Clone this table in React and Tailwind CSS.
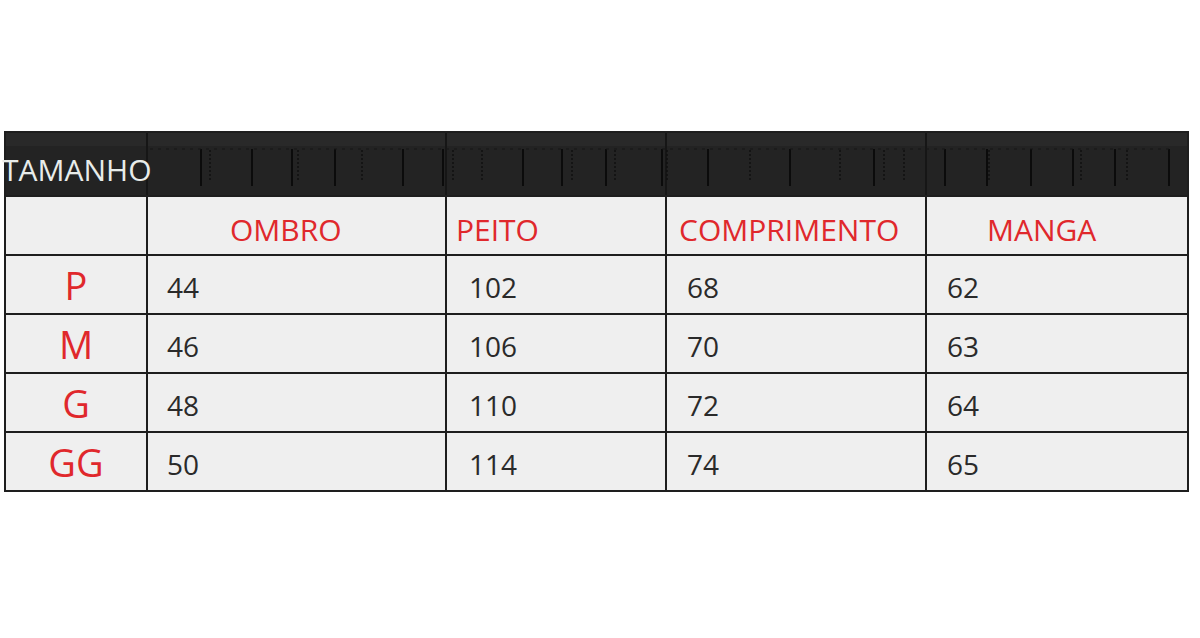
import React from "react";

const solid = [201, 252, 292, 335, 403, 443, 523, 562, 606, 662, 708, 790, 874, 945, 987, 1031, 1073, 1115, 1169];
const dotted = [210, 298, 362, 453, 482, 572, 615, 667, 750, 840, 884, 904, 989, 1081, 1127];
const colLines = [146, 445, 665, 925];

const rows = [
  ["P", "44", "102", "68", "62"],
  ["M", "46", "106", "70", "63"],
  ["G", "48", "110", "72", "64"],
  ["GG", "50", "114", "74", "65"],
];

const font = { fontFamily: '"Open Sans", "Liberation Sans", sans-serif' };

export default function App() {
  return (
    <div className="w-[1200px] h-[638px] bg-white overflow-hidden" style={font}>
      <div className="ml-[4px] mt-[131px] w-[1185px] bg-[#1e1e1e] p-[2px] grid grid-cols-[140px_297px_218px_258px_260px] gap-[2px]">
        <div className="col-span-5 h-[62px] relative bg-[#232323] flex items-start pt-[22px]">
          <svg className="absolute inset-0" width="1181" height="62" viewBox="6 133 1181 62">
            <rect x="6" y="133" width="1181" height="13" fill="#292929" />
            {colLines.map((x) => (
              <rect key={x} x={x} y="133" width="2" height="62" fill="#161616" />
            ))}
            {solid.map((x) => (
              <line key={x} x1={x} y1="149" x2={x} y2="186" stroke="#0b0b0b" strokeWidth="2" />
            ))}
            {dotted.map((x) => (
              <line key={"d" + x} x1={x} y1="150" x2={x} y2="182" stroke="#111" strokeWidth="1.5" strokeDasharray="2 2" />
            ))}
            <line x1="150" y1="149" x2="1170" y2="149" stroke="#161616" strokeWidth="1" strokeDasharray="3 5" />
          </svg>
          <span className="relative ml-[-4px] text-[30px] leading-none text-[#e8ecea] whitespace-nowrap">
            TAMANHO
          </span>
        </div>

        <div className="h-[57px] bg-[#efefef]" />
        <div className="h-[57px] bg-[#efefef] pt-[18px] pl-[82px] text-[30px] leading-none text-[#e0282c]">OMBRO</div>
        <div className="h-[57px] bg-[#efefef] pt-[18px] pl-[9px] text-[30px] leading-none text-[#e0282c]">PEITO</div>
        <div className="h-[57px] bg-[#efefef] pt-[18px] pl-[12px] text-[30px] leading-none text-[#e0282c] whitespace-nowrap">COMPRIMENTO</div>
        <div className="h-[57px] bg-[#efefef] pt-[18px] pl-[60px] text-[30px] leading-none text-[#e0282c]">MANGA</div>

        {rows.map((r) => (
          <React.Fragment key={r[0]}>
            <div className="h-[57px] bg-[#efefef] pt-[10px] text-center text-[38px] leading-none text-[#e0282c]">{r[0]}</div>
            <div className="h-[57px] bg-[#efefef] pt-[17px] pl-[19px] text-[28px] leading-none text-[#2a2a2a]">{r[1]}</div>
            <div className="h-[57px] bg-[#efefef] pt-[17px] pl-[22px] text-[28px] leading-none text-[#2a2a2a]">{r[2]}</div>
            <div className="h-[57px] bg-[#efefef] pt-[17px] pl-[20px] text-[28px] leading-none text-[#2a2a2a]">{r[3]}</div>
            <div className="h-[57px] bg-[#efefef] pt-[17px] pl-[20px] text-[28px] leading-none text-[#2a2a2a]">{r[4]}</div>
          </React.Fragment>
        ))}
      </div>
    </div>
  );
}
